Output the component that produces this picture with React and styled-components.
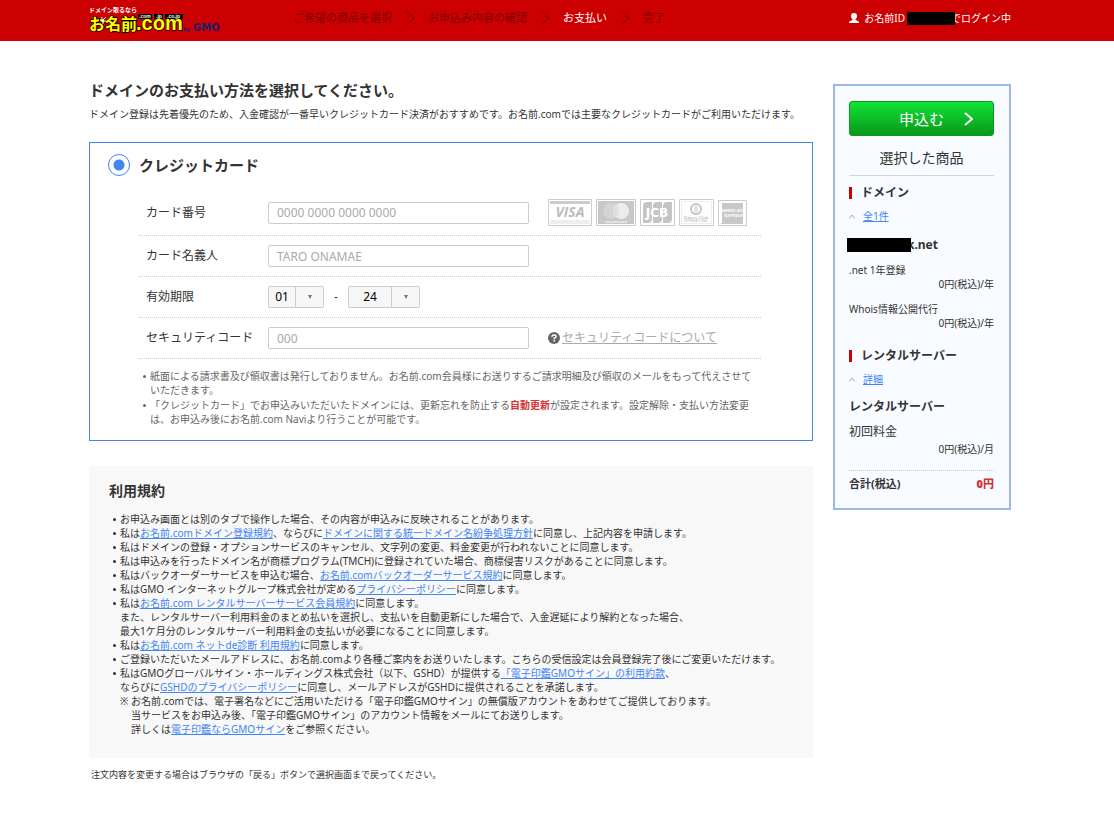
import React from 'react';
import styled, { createGlobalStyle } from 'styled-components';

const Global = createGlobalStyle`
  *, *::before, *::after { box-sizing: border-box; }
  body {
    margin: 0;
    background: #fff;
    color: #333;
    font-family: "Noto Sans", "Noto Sans CJK JP", sans-serif;
    font-size: 10px;
    line-height: 14px;
  }
  h1, h2, h3, h4, p, ul, ol, dl, dd { margin: 0; padding: 0; }
  ul, ol { list-style: none; }
  button, input, select { font: inherit; margin: 0; }
`;

const Container = styled.div`
  display: flex;
  width: calc(100% - 14px);
  max-width: 1100px;
  padding: 0 89px;
`;

const Header = styled.header`
  background: #c00;
  color: #fff;
`;

const HeaderInner = styled(Container)`
  height: 41px;
  align-items: center;
`;

const LogoLink = styled.a`
  display: block;
  width: 132px;
  height: 41px;
  flex: none;
`;

const Steps = styled.ol`
  display: flex;
  align-items: center;
  gap: 13px;
  margin: 0 auto 6px 72px;
  font-size: 11px;
  line-height: 16px;
  white-space: nowrap;
`;

const Step = styled.li`
  display: flex;
  align-items: center;
  gap: 13px;
  color: ${p => (p.$current ? '#fff' : '#7d0000')};
`;

const Login = styled.p`
  display: flex;
  align-items: center;
  margin-bottom: 5px;
  white-space: nowrap;
  svg { margin-right: 5px; }
`;

const Redaction = styled.span`
  position: relative;
  flex: none;
  width: ${p => p.$width}px;
  height: ${p => p.$height}px;
  margin-left: ${p => p.$left}px;
  margin-right: -4px;
  background: #000;
`;

const Page = styled(Container)`
  gap: 20px;
  align-items: flex-start;
  padding-bottom: 39px;
`;

const Main = styled.main`
  flex: 1;
  min-width: 0;
  padding-top: 39px;
`;

const Title = styled.h1`
  font-size: 15px;
  line-height: 20px;
`;

const Lead = styled.p`
  margin-top: 7px;
`;

const PaymentBox = styled.section`
  margin-top: 21px;
  padding: 11px 51px 14px 49px;
  border: 1px solid #4285e6;
`;

const MethodLabel = styled.label`
  display: flex;
  align-items: center;
  gap: 9px;
  margin-left: -31px;
  font-size: 15px;
  line-height: 22px;
  font-weight: bold;
`;

const Radio = styled.input`
  appearance: none;
  width: 22px;
  height: 22px;
  border: 1px solid #4285f4;
  border-radius: 50%;
  background: radial-gradient(circle, #4285f4 5px, #fff 6px);
`;

const Fields = styled.div`
  margin-top: 14px;
`;

const Field = styled.div`
  display: flex;
  align-items: center;
  padding: 9px 0;
  border-bottom: 1px dotted #ccc;
`;

const FieldLabel = styled.label`
  width: 129px;
  padding-left: 7px;
  font-size: 12px;
`;

const TextInput = styled.input`
  width: 261px;
  height: 22px;
  margin-right: 19px;
  padding: 0 8px;
  border: 1px solid #ccc;
  border-radius: 2px;
  background: #fff;
  font-size: 12px;
  &::placeholder { color: #aaa; opacity: 1; }
`;

const Cards = styled.div`
  display: flex;
  align-items: flex-end;
  gap: 4px;
  svg { display: block; }
`;

const SelectWrap = styled.span`
  display: inline-flex;
  position: relative;
  width: ${p => p.$width}px;
  &::before {
    content: "";
    position: absolute;
    right: 28px;
    top: 0;
    bottom: 0;
    width: 1px;
    background: #ccc;
  }
  &::after {
    content: "";
    position: absolute;
    right: 12px;
    top: 9px;
    border: 2px solid transparent;
    border-top: 4px solid #777;
    border-bottom: 0;
  }
`;

const Select = styled.select`
  appearance: none;
  width: 100%;
  height: 22px;
  padding: 0 28px 0 0;
  border: 1px solid #ccc;
  border-radius: 2px;
  background: #f7f7f7;
  color: #000;
  font-size: 12px;
  text-align-last: center;
`;

const Dash = styled.span`
  width: 24px;
  text-align: center;
  font-size: 12px;
`;

const HelpLink = styled.a`
  display: flex;
  align-items: center;
  gap: 2px;
  color: #aaa;
  font-size: 12px;
  white-space: nowrap;
`;

const Bulleted = styled.ul`
  > li { position: relative; }
  > li::before {
    content: "";
    position: absolute;
    left: -7px;
    top: 6px;
    width: 3px;
    height: 3px;
    border-radius: 50%;
    background: currentColor;
  }
`;

const Notes = styled(Bulleted)`
  display: grid;
  gap: 1px;
  margin: 10px 0 0;
  padding: 0 5px 0 11px;
  color: #666;
`;

const Alert = styled.strong`
  color: #d43434;
`;

const Terms = styled.section`
  margin-top: 25px;
  padding: 15px 20px 22px;
  background: #f8f8f8;
`;

const TermsTitle = styled.h2`
  font-size: 14px;
  line-height: 20px;
`;

const TermsList = styled(Bulleted)`
  margin-top: 11px;
  padding-left: 11px;
`;

const Indented = styled.p`
  padding-left: 11px;
  text-indent: -11px;
`;

const Mark = styled.span`
  display: inline-block;
  width: 11px;
  text-indent: 0;
`;

const Link = styled.a`
  color: #4285f4;
`;

const BackNote = styled.p`
  margin: 10px 0 0 2px;
  font-size: 9px;
`;

const Summary = styled.aside`
  flex: none;
  width: 178px;
  margin-top: 43px;
  padding: 15px 15px 17px 14px;
  border: 2px solid #9db8e6;
  background: #f8fbff;
`;

const ApplyButton = styled.button`
  display: flex;
  align-items: center;
  justify-content: flex-end;
  gap: 20px;
  width: 100%;
  height: 35px;
  padding: 0 20px 0 0;
  border: 1px solid #0b9a20;
  border-radius: 3px;
  background: linear-gradient(#12e335, #07981b);
  color: #fff;
  font-size: 15px;
`;

const SummaryTitle = styled.h2`
  margin-top: 12px;
  padding-bottom: 7px;
  border-bottom: 1px solid #ced4dc;
  font-size: 14px;
  line-height: 20px;
  font-weight: normal;
  text-align: center;
`;

const GroupTitle = styled.h3`
  display: flex;
  align-items: center;
  gap: 9px;
  margin-top: ${p => p.$top}px;
  font-size: 12px;
  line-height: 16px;
  &::before {
    content: "";
    width: 3px;
    height: 12px;
    background: #c00;
  }
`;

const Toggle = styled.div`
  display: flex;
  align-items: center;
  gap: 8px;
  margin-top: 8px;
`;

const ItemName = styled.h4`
  display: flex;
  align-items: center;
  margin-top: ${p => p.$top}px;
  font-size: 12px;
`;

const Line = styled.p`
  margin-top: ${p => p.$top}px;
  font-size: ${p => (p.$large ? 12 : 10)}px;
`;

const Price = styled.p`
  margin-top: ${p => p.$top || 0}px;
  text-align: right;
`;

const Total = styled.p`
  display: flex;
  justify-content: space-between;
  margin-top: 14px;
  padding-top: 6px;
  border-top: 1px dotted #c4c8ce;
  font-size: 11px;
  font-weight: bold;
`;

const Logo = () => (
  <svg width="132" height="41" viewBox="0 0 132 41" role="img" aria-label="お名前.com by GMO">
    <g fontFamily='"Noto Sans CJK JP", sans-serif' fontWeight="bold">
      <text x="0" y="12" fontSize="6" fill="#fff">ドメイン取るなら</text>
      <text x="0" y="30" fontSize="16" fill="#ff0" stroke="#000" strokeWidth="1.500" paintOrder="stroke">お名前</text>
    </g>
    <text x="47" y="30" fontSize="20" fontFamily="Liberation Sans, sans-serif" fontWeight="bold" fill="#ff0" stroke="#000" strokeWidth="1.500" paintOrder="stroke">.com</text>
    <path d="M12 17l2 3 3-3M14 20v4M12 21h5" stroke="#fff" strokeWidth="1" fill="none" />
    <path d="M49 14h14v5H49zM65 14h9v5h-9zM76 14h18v5H76z" fill="#000" />
    <g fontFamily="Liberation Sans, sans-serif" fontWeight="bold" fontSize="5" fill="#fff">
      <text x="50" y="18">.com</text>
      <text x="67" y="18">.jp</text>
      <text x="78" y="18">.co.jp</text>
    </g>
    <g fontFamily="DejaVu Sans, sans-serif" fontWeight="bold" fill="#17206b">
      <text x="94" y="31" fontSize="5">by</text>
      <text x="104" y="31" fontSize="10">GMO</text>
    </g>
  </svg>
);

const Chevron = ({ color = '#7d0000', w = 10, h = 16, stroke = 1 }) => (
  <svg width={w} height={h} viewBox={`0 0 ${w} ${h}`} fill="none" stroke={color} strokeWidth={stroke} aria-hidden="true">
    <path d={`M1 1L${w - 1} ${h / 2}L1 ${h - 1}`} />
  </svg>
);

const UserIcon = () => (
  <svg width="10" height="10" viewBox="0 0 10 10" fill="#fff" aria-hidden="true">
    <path d="M5 0C3 0 2 1 2 3c0 1.500.7 2.600 1.500 3.200V7L1 8Q0 8.500 0 10h10Q10 8.500 9 8L6.500 7v-.8C7.300 5.600 8 4.500 8 3c0-2-1-3-3-3z" />
  </svg>
);

const HelpIcon = () => (
  <svg width="12" height="12" viewBox="0 0 12 12" aria-hidden="true">
    <circle cx="6" cy="6" r="6" fill="#666" />
    <path d="M4 4.800Q4 3 6 3t2 1.700Q8 5.600 6.200 6.200V7.200M6.200 8v1.500" fill="none" stroke="#fff" strokeWidth="1.500" />
  </svg>
);

const Caret = () => (
  <svg width="6" height="5" viewBox="0 0 6 5" fill="none" stroke="#aaa" aria-hidden="true">
    <path d="M.5 4.500L3 1l2.500 3.500" />
  </svg>
);

const CardBrands = () => (
  <Cards>
    <svg width="44" height="27" viewBox="0 0 44 27" role="img" aria-label="VISA">
      <path d="M.5.5h43v26H.5z" fill="#fff" stroke="#ccc" />
      <path d="M2 2h40v3H2z" fill="#ccc" />
      <path d="M2 21h40v4H2z" fill="#eee" />
      <text x="22" y="18" textAnchor="middle" fontSize="14" fontWeight="bold" fontStyle="italic" fontFamily="Open Sans, sans-serif" fill="#bbb">VISA</text>
    </svg>
    <svg width="40" height="27" viewBox="0 0 40 27" role="img" aria-label="mastercard">
      <path d="M.5.5h39v26H.5z" fill="#fff" stroke="#ccc" />
      <path d="M2 2h36v23H2z" fill="#c8c8c8" />
      <circle cx="15" cy="12" r="8" fill="#d4d4d4" />
      <circle cx="25" cy="12" r="8" fill="#ececec" />
      <path d="M20 6a8 8 0 0 1 0 12a8 8 0 0 1 0-12z" fill="#dedede" />
      <text x="20" y="24" textAnchor="middle" fontSize="4" fontWeight="bold" fontFamily="Liberation Sans, sans-serif" fill="#f4f4f4">mastercard</text>
    </svg>
    <svg width="35" height="27" viewBox="0 0 35 27" role="img" aria-label="JCB">
      <path d="M.5.5h34v26H.5z" fill="#fff" stroke="#ccc" />
      <path d="M3 7q0-4 4-4h5v17q0 4-4 4H3zM13 7q0-4 4-4h5v17q0 4-4 4h-5zM23 7q0-4 4-4h5v17q0 4-4 4h-5z" fill="#c4c4c4" />
      <text x="17" y="18" textAnchor="middle" fontSize="12" fontWeight="bold" fontFamily="DejaVu Sans, sans-serif" fill="#fff">JCB</text>
    </svg>
    <svg width="35" height="27" viewBox="0 0 35 27" role="img" aria-label="Diners Club International">
      <path d="M.5.5h34v26H.5z" fill="#fff" stroke="#ccc" />
      <path d="M2.500 2.500h30v22h-30z" fill="none" stroke="#eee" />
      <circle cx="17" cy="10" r="5" fill="none" stroke="#c4c4c4" strokeWidth="2" />
      <path d="M16 7v6M18 7v6" stroke="#c4c4c4" />
      <text x="17" y="20" textAnchor="middle" fontSize="5" fontFamily="Liberation Serif, serif" fill="#aaa">Diners Club</text>
      <text x="17" y="23" textAnchor="middle" fontSize="3" fontFamily="Liberation Sans, sans-serif" fill="#bbb">INTERNATIONAL</text>
    </svg>
    <svg width="29" height="26" viewBox="0 0 29 26" role="img" aria-label="American Express">
      <path d="M.5.5h28v25H.5z" fill="#fff" stroke="#ccc" />
      <path d="M4 3h21v21H3v-1h1z" fill="#c8c8c8" />
      <g fontFamily="Liberation Sans, sans-serif" fontWeight="bold" fontSize="4" fill="#fff" textAnchor="middle">
        <text x="14" y="12">AMERICAN</text>
        <text x="16" y="17">EXPRESS</text>
      </g>
    </svg>
  </Cards>
);

export default function App() {
  return (
    <>
      <Global />
      <Header>
        <HeaderInner>
          <LogoLink href="#"><Logo /></LogoLink>
          <Steps>
            <Step>ご希望の商品を選択<Chevron /></Step>
            <Step>お申込み内容の確認<Chevron /></Step>
            <Step $current>お支払い<Chevron /></Step>
            <Step>完了</Step>
          </Steps>
          <Login>
            <UserIcon />お名前ID<Redaction $width={48} $height={13} $left={2} />でログイン中
          </Login>
        </HeaderInner>
      </Header>
      <Page>
        <Main>
          <Title>ドメインのお支払い方法を選択してください。</Title>
          <Lead>ドメイン登録は先着優先のため、入金確認が一番早いクレジットカード決済がおすすめです。お名前.comでは主要なクレジットカードがご利用いただけます。</Lead>

          <PaymentBox>
            <MethodLabel>
              <Radio type="radio" name="method" defaultChecked />
              クレジットカード
            </MethodLabel>
            <Fields>
              <Field>
                <FieldLabel htmlFor="number">カード番号</FieldLabel>
                <TextInput id="number" placeholder="0000 0000 0000 0000" />
                <CardBrands />
              </Field>
              <Field>
                <FieldLabel htmlFor="holder">カード名義人</FieldLabel>
                <TextInput id="holder" placeholder="TARO ONAMAE" />
              </Field>
              <Field>
                <FieldLabel htmlFor="month">有効期限</FieldLabel>
                <SelectWrap $width={56}>
                  <Select id="month" defaultValue="01"><option>01</option></Select>
                </SelectWrap>
                <Dash>-</Dash>
                <SelectWrap $width={72}>
                  <Select aria-label="有効期限（年）" defaultValue="24"><option>24</option></Select>
                </SelectWrap>
              </Field>
              <Field>
                <FieldLabel htmlFor="cvc">セキュリティコード</FieldLabel>
                <TextInput id="cvc" placeholder="000" />
                <HelpLink href="#"><HelpIcon />セキュリティコードについて</HelpLink>
              </Field>
            </Fields>
            <Notes>
              <li>紙面による請求書及び領収書は発行しておりません。お名前.com会員様にお送りするご請求明細及び領収のメールをもって代えさせていただきます。</li>
              <li>「クレジットカード」でお申込みいただいたドメインには、更新忘れを防止する<Alert>自動更新</Alert>が設定されます。設定解除・支払い方法変更は、お申込み後にお名前.com Naviより行うことが可能です。</li>
            </Notes>
          </PaymentBox>

          <Terms>
            <TermsTitle>利用規約</TermsTitle>
            <TermsList>
              <li>お申込み画面とは別のタブで操作した場合、その内容が申込みに反映されることがあります。</li>
              <li>私は<Link href="#">お名前.comドメイン登録規約</Link>、ならびに<Link href="#">ドメインに関する統一ドメイン名紛争処理方針</Link>に同意し、上記内容を申請します。</li>
              <li>私はドメインの登録・オプションサービスのキャンセル、文字列の変更、料金変更が行われないことに同意します。</li>
              <li>私は申込みを行ったドメイン名が商標プログラム(TMCH)に登録されていた場合、商標侵害リスクがあることに同意します。</li>
              <li>私はバックオーダーサービスを申込む場合、<Link href="#">お名前.comバックオーダーサービス規約</Link>に同意します。</li>
              <li>私はGMO インターネットグループ株式会社が定める<Link href="#">プライバシーポリシー</Link>に同意します。</li>
              <li>
                私は<Link href="#">お名前.com レンタルサーバーサービス会員規約</Link>に同意します。<br />
                また、レンタルサーバー利用料金のまとめ払いを選択し、支払いを自動更新にした場合で、入金遅延により解約となった場合、<br />
                最大1ケ月分のレンタルサーバー利用料金の支払いが必要になることに同意します。
              </li>
              <li>私は<Link href="#">お名前.com ネットde診断 利用規約</Link>に同意します。</li>
              <li>ご登録いただいたメールアドレスに、お名前.comより各種ご案内をお送りいたします。こちらの受信設定は会員登録完了後にご変更いただけます。</li>
              <li>
                私はGMOグローバルサイン・ホールディングス株式会社（以下、GSHD）が提供する<Link href="#">「電子印鑑GMOサイン」の利用約款</Link>、<br />
                ならびに<Link href="#">GSHDのプライバシーポリシー</Link>に同意し、メールアドレスがGSHDに提供されることを承諾します。
                <Indented>
                  <Mark>※</Mark>お名前.comでは、電子署名などにご活用いただける「電子印鑑GMOサイン」の無償版アカウントをあわせてご提供しております。
                </Indented>
                <Indented>
                  <Mark />当サービスをお申込み後、「電子印鑑GMOサイン」のアカウント情報をメールにてお送りします。
                </Indented>
                <Indented>
                  <Mark />詳しくは<Link href="#">電子印鑑ならGMOサイン</Link>をご参照ください。
                </Indented>
              </li>
            </TermsList>
          </Terms>
          <BackNote>注文内容を変更する場合はブラウザの「戻る」ボタンで選択画面まで戻ってください。</BackNote>
        </Main>

        <Summary>
          <ApplyButton type="button">
            申込む<Chevron color="#fff" w={9} h={14} stroke={2} />
          </ApplyButton>
          <SummaryTitle>選択した商品</SummaryTitle>
          <GroupTitle $top={9}>ドメイン</GroupTitle>
          <Toggle><Caret /><Link href="#">全1件</Link></Toggle>
          <ItemName $top={15}><Redaction $width={64} $height={14} $left={-2} />k.net</ItemName>
          <Line $top={11}>.net 1年登録</Line>
          <Price>0円(税込)/年</Price>
          <Line $top={11}>Whois情報公開代行</Line>
          <Price>0円(税込)/年</Price>
          <GroupTitle $top={18}>レンタルサーバー</GroupTitle>
          <Toggle><Caret /><Link href="#">詳細</Link></Toggle>
          <ItemName $top={14}>レンタルサーバー</ItemName>
          <Line $top={11} $large>初回料金</Line>
          <Price $top={3}>0円(税込)/月</Price>
          <Total><span>合計(税込)</span><Alert>0円</Alert></Total>
        </Summary>
      </Page>
    </>
  );
}
